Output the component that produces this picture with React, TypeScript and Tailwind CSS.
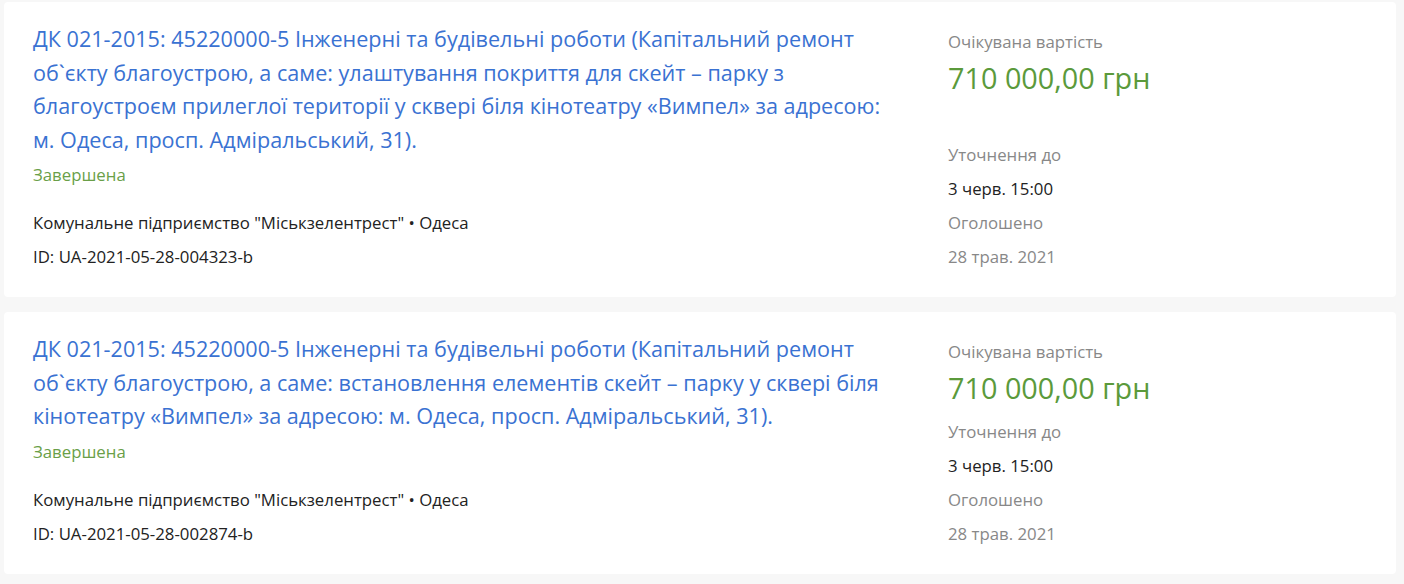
const tenders = [
  {
    title:
      "ДК 021-2015: 45220000-5 Інженерні та будівельні роботи (Капітальний ремонт об`єкту благоустрою, а саме: улаштування покриття для скейт – парку з благоустроєм прилеглої території у сквері біля кінотеатру «Вимпел» за адресою: м. Одеса, просп. Адміральський, 31).",
    id: "UA-2021-05-28-004323-b",
  },
  {
    title:
      "ДК 021-2015: 45220000-5 Інженерні та будівельні роботи (Капітальний ремонт об`єкту благоустрою, а саме: встановлення елементів скейт – парку у сквері біля кінотеатру «Вимпел» за адресою: м. Одеса, просп. Адміральський, 31).",
    id: "UA-2021-05-28-002874-b",
  },
];

function TenderCard({ title, id }: { title: string; id: string }) {
  return (
    <div className="bg-white rounded-[4px] px-[29px] pt-[20px] pb-[29px] grid grid-cols-[860px_1fr] gap-[55px]">
      {/* Left */}
      <div className="flex flex-col">
        <a href="#" className="text-[21.6px] leading-[33.5px] text-[#3a72d2]">
          {title}
        </a>
        <div className="mt-2 text-[16.8px] leading-[22px] text-[#6a9f48]">Завершена</div>
        <div className="mt-[26px] text-[16.8px] leading-[22px] text-[#222]">
          Комунальне підприємство "Міськзелентрест" • Одеса
        </div>
        <div className="mt-3 text-[16.8px] leading-[22px] text-[#222]">ID: {id}</div>
      </div>

      {/* Right */}
      <div className="flex flex-col justify-between pt-[9px]">
        <div>
          <div className="text-[16.8px] leading-[22px] text-[#888]">Очікувана вартість</div>
          <div className="mt-[5px] text-[28.8px] leading-[40px] text-[#5b9a3b]">710 000,00 грн</div>
        </div>
        <div className="flex flex-col gap-3 text-[16.8px] leading-[22px]">
          <div className="text-[#888]">Уточнення до</div>
          <div className="text-[#222]">3 черв. 15:00</div>
          <div className="text-[#888]">Оголошено</div>
          <div className="text-[#888]">28 трав. 2021</div>
        </div>
      </div>
    </div>
  );
}

export default function App() {
  return (
    <div
      className="min-h-screen bg-[#f7f7f7] pt-[2px] pl-[4px] pr-[8px] flex flex-col gap-[15px]"
      style={{ fontFamily: '"Open Sans", "Noto Sans", sans-serif' }}
    >
      {tenders.map((t) => (
        <TenderCard key={t.id} title={t.title} id={t.id} />
      ))}
    </div>
  );
}
